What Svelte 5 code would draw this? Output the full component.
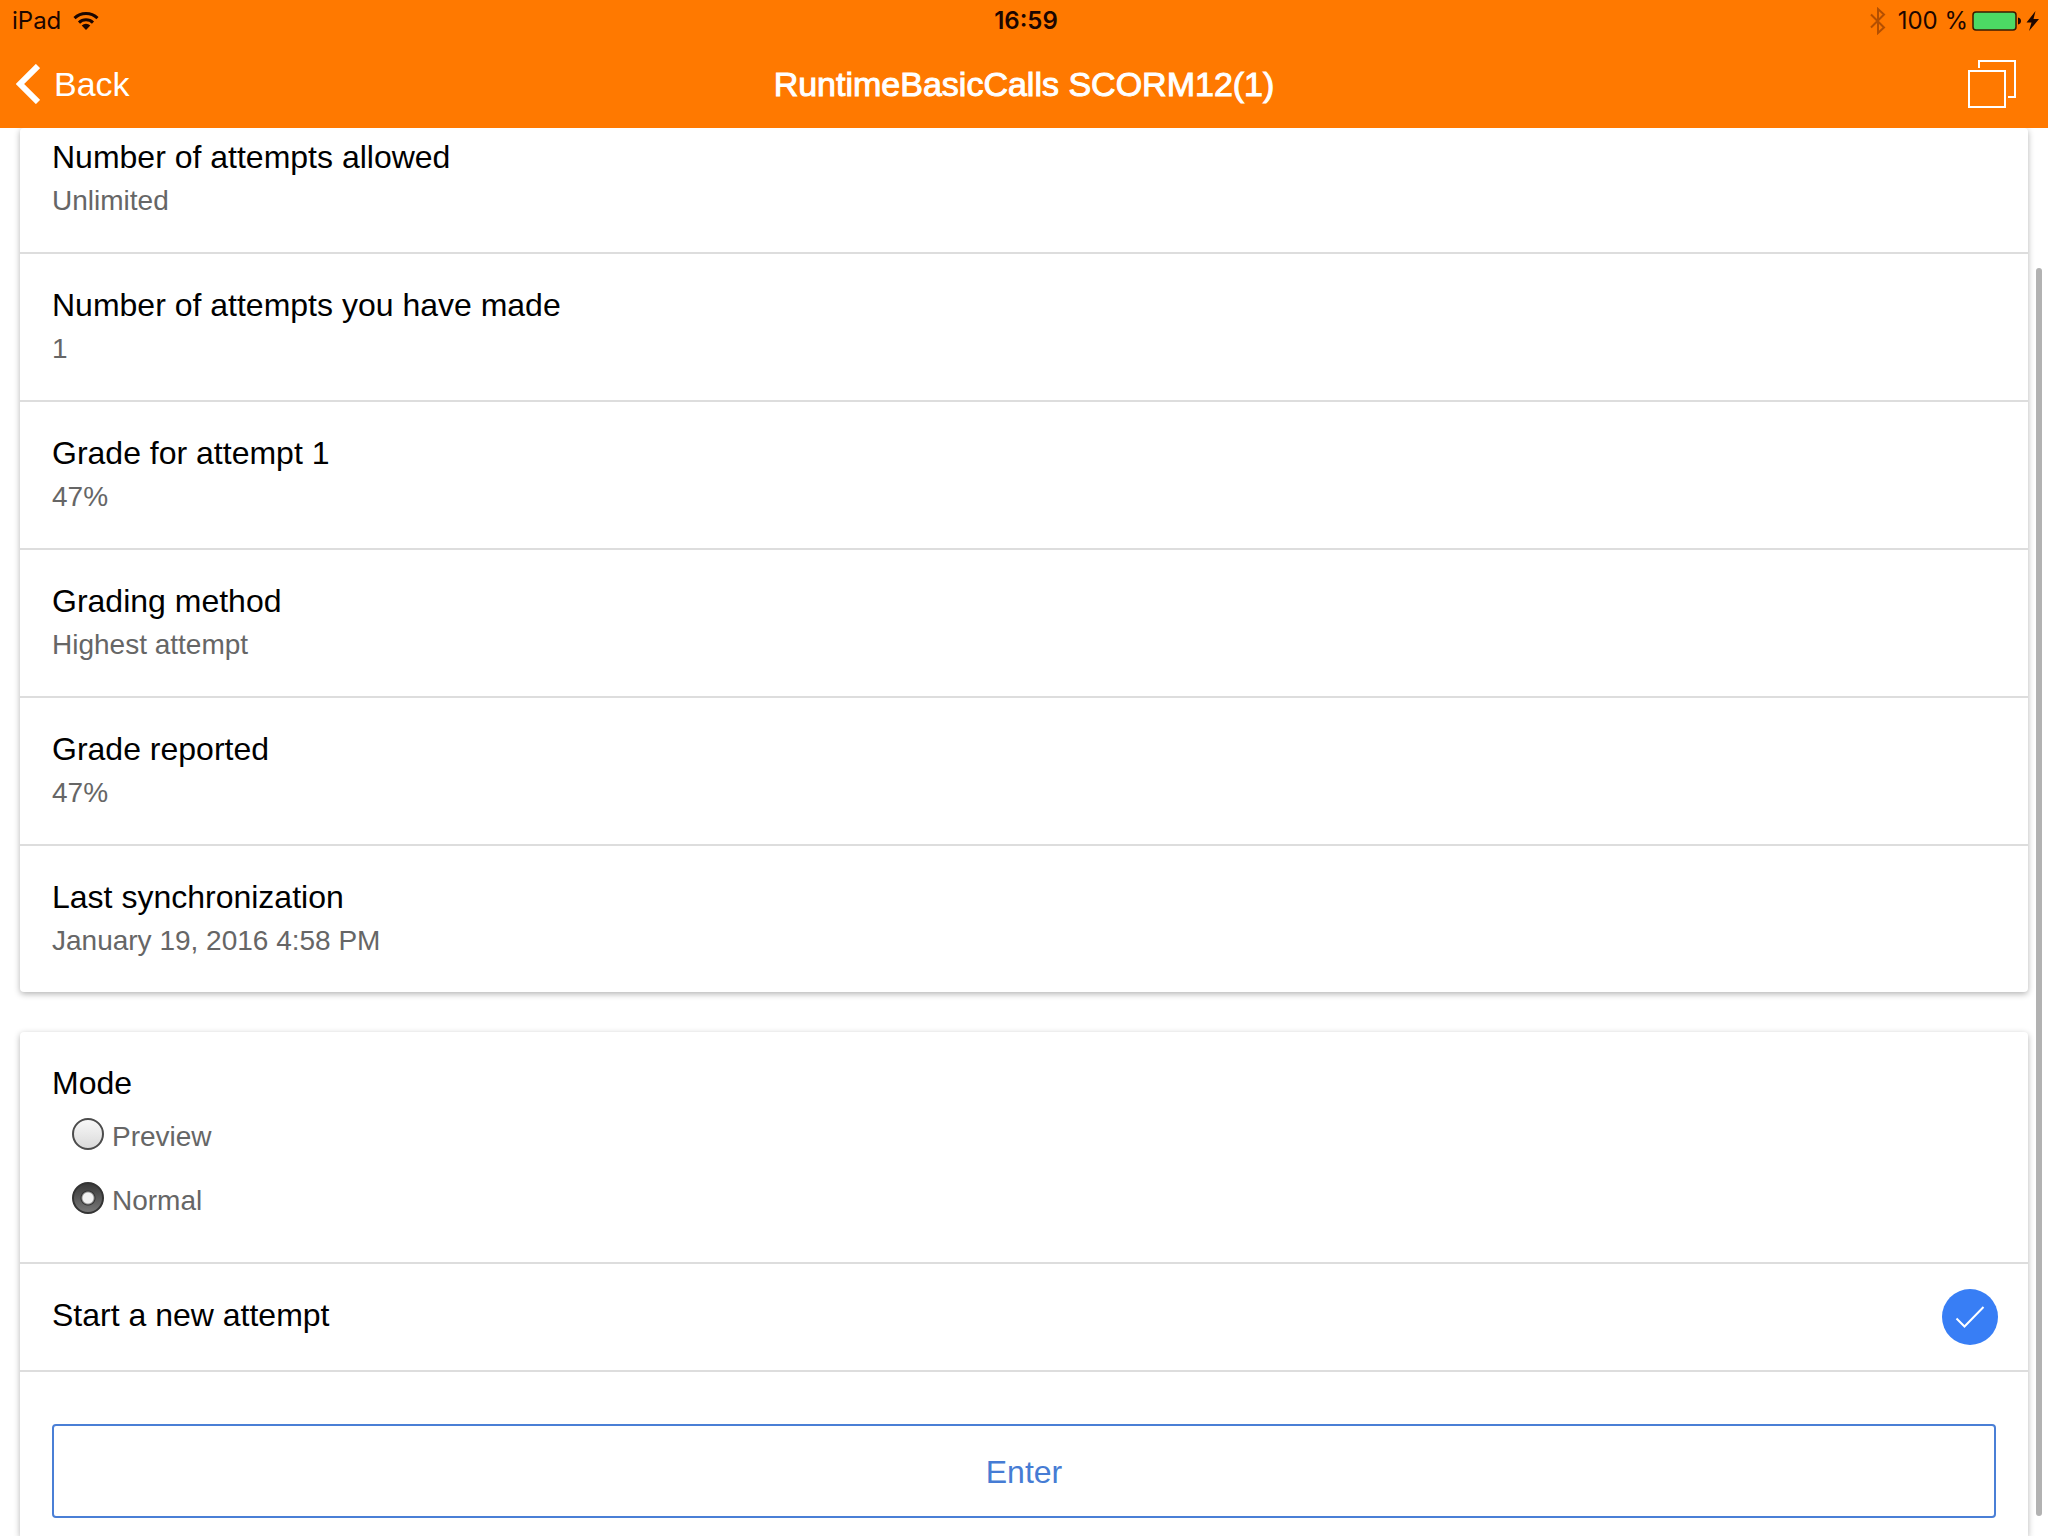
<script lang="ts">
	const details = [
		{ label: 'Number of attempts allowed', value: 'Unlimited' },
		{ label: 'Number of attempts you have made', value: '1' },
		{ label: 'Grade for attempt 1', value: '47%' },
		{ label: 'Grading method', value: 'Highest attempt' },
		{ label: 'Grade reported', value: '47%' },
		{ label: 'Last synchronization', value: 'January 19, 2016 4:58 PM' }
	];

	const modes = [
		{ id: 'preview', label: 'Preview' },
		{ id: 'normal', label: 'Normal' }
	];

	let mode = $state('normal');
	let newAttempt = $state(true);
</script>

<div class="screen">
	<header>
		<div class="status">
			<div class="side">
				<span>iPad</span>
				<svg class="wifi" width="26" height="20" viewBox="0 0 26 20" aria-hidden="true">
					<g fill="none" stroke="#1c0600" stroke-width="3">
						<path d="M1.5 7.2a16.5 16.5 0 0 1 23 0" />
						<path d="M6 11.6a10 10 0 0 1 14 0" />
					</g>
					<path d="M13 19l-4.3-4.4a6.2 6.2 0 0 1 8.6 0z" fill="#1c0600" />
				</svg>
			</div>
			<time>16:59</time>
			<div class="side end">
				<svg class="bluetooth" width="16" height="28" viewBox="0 0 16 28" aria-hidden="true">
					<path
						d="M1 7.5l13 13L8 26V2l6 5.500-13 13"
						fill="none"
						stroke="#b44f00"
						stroke-width="2"
					/>
				</svg>
				<span>100 %</span>
				<svg class="battery" width="68" height="20" viewBox="0 0 68 20" aria-hidden="true">
					<rect x="1" y="1" width="43" height="18" rx="3" fill="#4cd964" stroke="#3a1a00" stroke-width="1.5" />
					<path d="M46 6.500c4 .5 4 6.500 0 7z" fill="#1c0600" />
					<path d="M63.500 0L54.500 11.500h5L57 20l10-12h-5.500z" fill="#1c0600" />
				</svg>
			</div>
		</div>
		<nav>
			<a class="back" href="#back">
				<svg width="24" height="40" viewBox="0 0 24 40" aria-hidden="true">
					<path d="M22 2L4 20l18 18" fill="none" stroke="#fff" stroke-width="6" />
				</svg>
				Back
			</a>
			<h1>RuntimeBasicCalls SCORM12(1)</h1>
			<button class="windows" type="button" aria-label="Windows">
				<svg width="48" height="48" viewBox="0 0 48 48" aria-hidden="true">
					<path
						d="M1 11h36v36H1zM11 8V1h36v36h-7"
						fill="none"
						stroke="#fff"
						stroke-width="2"
					/>
				</svg>
			</button>
		</nav>
	</header>

	<main>
		<section class="card scrolled">
			<dl>
				{#each details as item}
					<div class="row">
						<dt>{item.label}</dt>
						<dd>{item.value}</dd>
					</div>
				{/each}
			</dl>
		</section>

		<section class="card last">
			<fieldset class="row">
				<legend>Mode</legend>
				<div class="options">
					{#each modes as option}
						<label>
							<input type="radio" name="mode" value={option.id} bind:group={mode} />
							<span>{option.label}</span>
						</label>
					{/each}
				</div>
			</fieldset>

			<label class="toggle">
				<span>Start a new attempt</span>
				<input type="checkbox" bind:checked={newAttempt} />
				<svg class="check" viewBox="0 0 56 56" aria-hidden="true">
					<circle cx="28" cy="28" r="28" />
					{#if newAttempt}
						<path d="M14.500 29.500l8 8L41.500 18" />
					{/if}
				</svg>
			</label>

			<div class="action">
				<button class="enter" type="button">Enter</button>
			</div>
		</section>
	</main>

	<div class="scrollbar" aria-hidden="true"></div>
</div>

<style>
	:global(body) {
		background: #fff;
	}

	.screen {
		position: relative;
		display: flex;
		flex-direction: column;
		min-height: 100vh;
		overflow: hidden;
		box-sizing: border-box;
		font-family: 'Liberation Sans', Helvetica, Arial, sans-serif;
		font-size: 32px;
		line-height: 38px;
		color: #000;
	}

	header {
		position: relative;
		z-index: 1;
		background: #ff7900;
	}

	.status {
		display: grid;
		grid-template-columns: 1fr auto 1fr;
		align-items: center;
		box-sizing: border-box;
		height: 40px;
		padding: 2px 8px 0 12px;
		font-family: Inter, sans-serif;
		font-size: 24px;
		color: #1c0600;
	}

	.side {
		display: flex;
		align-items: center;
		gap: 12px;
	}

	.end {
		justify-content: flex-end;
	}

	.battery {
		margin-left: -8px;
	}

	time {
		font-weight: 600;
	}

	nav {
		display: grid;
		grid-template-columns: 1fr auto 1fr;
		align-items: center;
		height: 88px;
		padding: 0 16px;
		font-size: 34px;
		color: #fff;
	}

	.back {
		display: flex;
		align-items: center;
		gap: 14px;
		color: inherit;
		text-decoration: none;
	}

	h1 {
		margin: 0;
		font-size: 34px;
		font-weight: 400;
		-webkit-text-stroke: 1px #fff;
	}

	.windows {
		display: flex;
		justify-self: end;
		padding: 0 16px;
		border: 0;
		background: none;
	}

	main {
		flex: 1;
		display: flex;
		flex-direction: column;
		gap: 40px;
		padding: 0 20px;
	}

	.card {
		border-radius: 4px;
		background: #fff;
		box-shadow: 0 2px 6px rgb(0 0 0 / 0.3);
	}

	.last {
		flex: 1;
		border-radius: 4px 4px 0 0;
	}

	dl {
		margin: 0;
	}

	.row {
		padding: 32px;
		border-bottom: 2px solid #ddd;
	}

	.scrolled .row:first-child {
		padding-top: 10px;
	}

	.scrolled .row:last-child {
		border-bottom: 0;
	}

	dd {
		margin: 6px 0 0;
		font-size: 28px;
		color: #666;
	}

	fieldset {
		min-width: 0;
		margin: 0;
		border: 0;
	}

	legend {
		float: left;
		width: 100%;
		padding: 0;
	}

	.options {
		clear: both;
		display: flex;
		flex-direction: column;
		align-items: flex-start;
		gap: 4px;
		padding: 2px 20px;
		font-size: 28px;
		color: #666;
	}

	.options label {
		display: flex;
		align-items: center;
		gap: 8px;
		height: 60px;
	}

	.options span {
		padding-top: 6px;
	}

	input {
		appearance: none;
		margin: 0;
	}

	input[type='radio'] {
		width: 32px;
		height: 32px;
		border: 2px solid #4c4c4c;
		border-radius: 50%;
		background: linear-gradient(#fafafa, #d8d8d8);
		background-origin: border-box;
	}

	input[type='radio']:checked {
		border-color: #333;
		background:
			radial-gradient(circle, #f2f2f2 5px, #333 7px, transparent 8px),
			linear-gradient(#3a3a3a, #777);
	}

	.toggle {
		display: flex;
		align-items: center;
		justify-content: space-between;
		padding: 25px 30px 25px 32px;
		border-bottom: 2px solid #ddd;
	}

	.toggle span {
		padding-bottom: 4px;
	}

	.toggle input {
		position: absolute;
		opacity: 0;
	}

	.check {
		width: 56px;
		height: 56px;
	}

	.check circle {
		fill: #387ef5;
	}

	.check path {
		fill: none;
		stroke: #fff;
		stroke-width: 2;
	}

	.action {
		padding: 52px 32px 18px;
	}

	.enter {
		width: 100%;
		padding: 27px 25px 25px;
		border: 2px solid #4a7fd6;
		border-radius: 4px;
		background: #fff;
		font: inherit;
		color: #467cd4;
	}

	.scrollbar {
		position: absolute;
		top: 268px;
		right: 6px;
		bottom: 20px;
		width: 6px;
		border-radius: 3px;
		background: #b2b2b2;
	}
</style>
